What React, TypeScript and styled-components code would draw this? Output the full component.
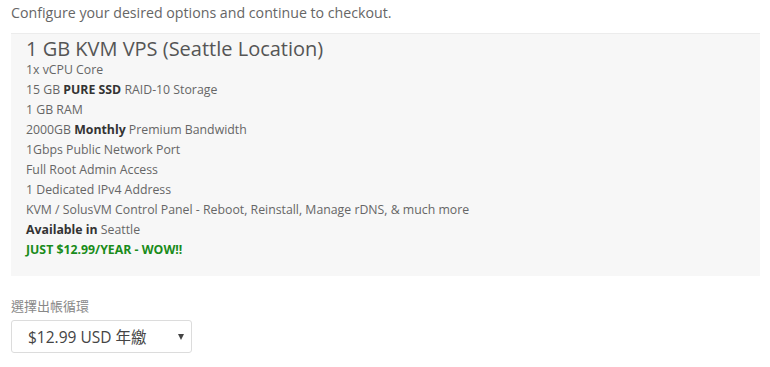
import React from "react";
import styled, { createGlobalStyle } from "styled-components";

const GlobalStyle = createGlobalStyle`
  body {
    margin: 0;
    background: #ffffff;
    font-family: "Open Sans", "Noto Sans CJK TC", sans-serif;
    color: #555;
  }
`;

const Page = styled.div`
  width: 749px;
  padding: 4px 11px 0 11px;
`;

const Intro = styled.p`
  margin: 0 0 11px 0;
  font-size: 14.2px;
  line-height: 18px;
  color: #666;
`;

const ProductPanel = styled.div`
  background: #f7f7f7;
  border-top: 1px solid #ececec;
  padding: 3px 15px 16px 15px;
`;

const Title = styled.h2`
  margin: 0;
  font-size: 20px;
  font-weight: 400;
  line-height: 23px;
  color: #555;
`;

const Features = styled.ul`
  list-style: none;
  margin: 0;
  padding: 0;
`;

const Feature = styled.li<{ $tone?: "green" }>`
  font-size: 12.3px;
  line-height: 20px;
  color: ${(p) => (p.$tone === "green" ? "#1a8c1a" : "#666")};
  font-weight: ${(p) => (p.$tone === "green" ? 700 : 400)};

  b {
    font-weight: 700;
    color: #333;
  }
`;

const CycleField = styled.div`
  margin-top: 21px;
  display: flex;
  flex-direction: column;
  gap: 5px;
`;

const FieldLabel = styled.label`
  font-size: 13px;
  line-height: 18px;
  color: #888;
`;

const SelectBox = styled.div`
  box-sizing: border-box;
  width: 181px;
  height: 33px;
  border: 1px solid #dcdcdc;
  border-radius: 3px;
  background: #fff;
  display: flex;
  align-items: center;
  justify-content: space-between;
  padding: 0 7px 0 16px;
  font-size: 15.5px;
  color: #444;
`;

const Caret = styled.span`
  width: 0;
  height: 0;
  border-left: 3.5px solid transparent;
  border-right: 3.5px solid transparent;
  border-top: 6px solid #444;
`;

const features: React.ReactNode[] = [
  "1x vCPU Core",
  <>15 GB <b>PURE SSD</b> RAID-10 Storage</>,
  "1 GB RAM",
  <>2000GB <b>Monthly</b> Premium Bandwidth</>,
  "1Gbps Public Network Port",
  "Full Root Admin Access",
  "1 Dedicated IPv4 Address",
  "KVM / SolusVM Control Panel - Reboot, Reinstall, Manage rDNS, & much more",
  <><b>Available in</b> Seattle</>,
];

const App = () => (
  <>
    <GlobalStyle />
    <Page>
      <Intro>Configure your desired options and continue to checkout.</Intro>
      <ProductPanel>
        <Title>1 GB KVM VPS (Seattle Location)</Title>
        <Features>
          {features.map((f, i) => (
            <Feature key={i}>{f}</Feature>
          ))}
          <Feature $tone="green">JUST $12.99/YEAR - WOW!!</Feature>
        </Features>
      </ProductPanel>
      <CycleField>
        <FieldLabel>選擇出帳循環</FieldLabel>
        <SelectBox>
          <span>$12.99 USD 年繳</span>
          <Caret />
        </SelectBox>
      </CycleField>
    </Page>
  </>
);

export default App;
